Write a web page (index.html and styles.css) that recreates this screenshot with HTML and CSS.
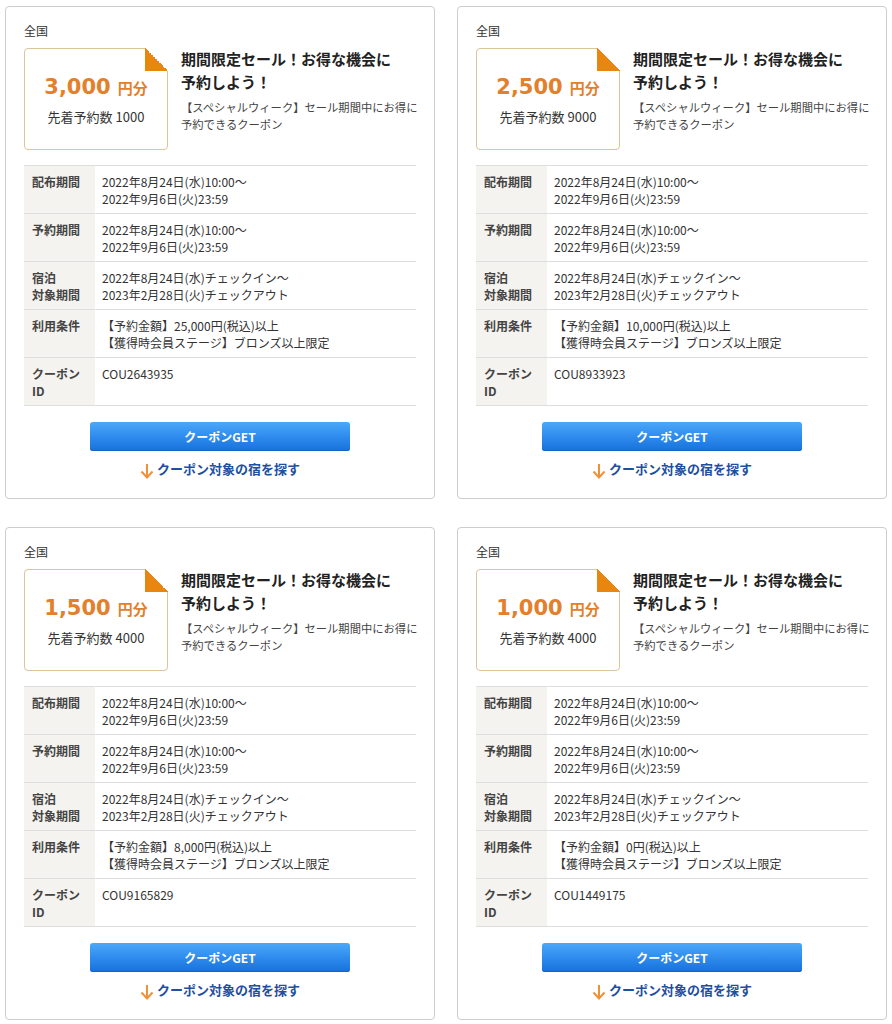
FILE: index.html
```html
<!DOCTYPE html>
<html lang="ja">
<head>
<meta charset="utf-8">
<title>クーポン</title>
<link rel="stylesheet" href="styles.css">
</head>
<body>
<div class="grid">

  <div class="card">
    <div class="area">全国</div>
    <div class="head">
      <div class="ticket">
        <div class="amount"><span class="num">3,000</span><span class="unit">円分</span></div>
        <div class="limit">先着予約数 1000</div>
      </div>
      <div class="info">
        <div class="title">期間限定セール！お得な機会に<br>予約しよう！</div>
        <div class="desc">【スペシャルウィーク】セール期間中にお得に<br>予約できるクーポン</div>
      </div>
    </div>
    <table class="spec">
      <tr><th>配布期間</th><td>2022年8月24日(水)10:00～<br>2022年9月6日(火)23:59</td></tr>
      <tr><th>予約期間</th><td>2022年8月24日(水)10:00～<br>2022年9月6日(火)23:59</td></tr>
      <tr><th>宿泊<br>対象期間</th><td>2022年8月24日(水)チェックイン～<br>2023年2月28日(火)チェックアウト</td></tr>
      <tr><th>利用条件</th><td>【予約金額】25,000円(税込)以上<br>【獲得時会員ステージ】ブロンズ以上限定</td></tr>
      <tr><th>クーポン<br>ID</th><td>COU2643935</td></tr>
    </table>
    <div class="actions">
      <a class="get-btn" href="#">クーポンGET</a>
      <a class="search-link" href="#"><svg class="arrow" width="14" height="16" viewBox="0 0 14 16"><path d="M7 1 V14 M1.5 8.5 L7 14.5 L12.5 8.5" fill="none" stroke="#f0913a" stroke-width="2"/></svg>クーポン対象の宿を探す</a>
    </div>
  </div>

  <div class="card">
    <div class="area">全国</div>
    <div class="head">
      <div class="ticket">
        <div class="amount"><span class="num">2,500</span><span class="unit">円分</span></div>
        <div class="limit">先着予約数 9000</div>
      </div>
      <div class="info">
        <div class="title">期間限定セール！お得な機会に<br>予約しよう！</div>
        <div class="desc">【スペシャルウィーク】セール期間中にお得に<br>予約できるクーポン</div>
      </div>
    </div>
    <table class="spec">
      <tr><th>配布期間</th><td>2022年8月24日(水)10:00～<br>2022年9月6日(火)23:59</td></tr>
      <tr><th>予約期間</th><td>2022年8月24日(水)10:00～<br>2022年9月6日(火)23:59</td></tr>
      <tr><th>宿泊<br>対象期間</th><td>2022年8月24日(水)チェックイン～<br>2023年2月28日(火)チェックアウト</td></tr>
      <tr><th>利用条件</th><td>【予約金額】10,000円(税込)以上<br>【獲得時会員ステージ】ブロンズ以上限定</td></tr>
      <tr><th>クーポン<br>ID</th><td>COU8933923</td></tr>
    </table>
    <div class="actions">
      <a class="get-btn" href="#">クーポンGET</a>
      <a class="search-link" href="#"><svg class="arrow" width="14" height="16" viewBox="0 0 14 16"><path d="M7 1 V14 M1.5 8.5 L7 14.5 L12.5 8.5" fill="none" stroke="#f0913a" stroke-width="2"/></svg>クーポン対象の宿を探す</a>
    </div>
  </div>

  <div class="card">
    <div class="area">全国</div>
    <div class="head">
      <div class="ticket">
        <div class="amount"><span class="num">1,500</span><span class="unit">円分</span></div>
        <div class="limit">先着予約数 4000</div>
      </div>
      <div class="info">
        <div class="title">期間限定セール！お得な機会に<br>予約しよう！</div>
        <div class="desc">【スペシャルウィーク】セール期間中にお得に<br>予約できるクーポン</div>
      </div>
    </div>
    <table class="spec">
      <tr><th>配布期間</th><td>2022年8月24日(水)10:00～<br>2022年9月6日(火)23:59</td></tr>
      <tr><th>予約期間</th><td>2022年8月24日(水)10:00～<br>2022年9月6日(火)23:59</td></tr>
      <tr><th>宿泊<br>対象期間</th><td>2022年8月24日(水)チェックイン～<br>2023年2月28日(火)チェックアウト</td></tr>
      <tr><th>利用条件</th><td>【予約金額】8,000円(税込)以上<br>【獲得時会員ステージ】ブロンズ以上限定</td></tr>
      <tr><th>クーポン<br>ID</th><td>COU9165829</td></tr>
    </table>
    <div class="actions">
      <a class="get-btn" href="#">クーポンGET</a>
      <a class="search-link" href="#"><svg class="arrow" width="14" height="16" viewBox="0 0 14 16"><path d="M7 1 V14 M1.5 8.5 L7 14.5 L12.5 8.5" fill="none" stroke="#f0913a" stroke-width="2"/></svg>クーポン対象の宿を探す</a>
    </div>
  </div>

  <div class="card">
    <div class="area">全国</div>
    <div class="head">
      <div class="ticket">
        <div class="amount"><span class="num">1,000</span><span class="unit">円分</span></div>
        <div class="limit">先着予約数 4000</div>
      </div>
      <div class="info">
        <div class="title">期間限定セール！お得な機会に<br>予約しよう！</div>
        <div class="desc">【スペシャルウィーク】セール期間中にお得に<br>予約できるクーポン</div>
      </div>
    </div>
    <table class="spec">
      <tr><th>配布期間</th><td>2022年8月24日(水)10:00～<br>2022年9月6日(火)23:59</td></tr>
      <tr><th>予約期間</th><td>2022年8月24日(水)10:00～<br>2022年9月6日(火)23:59</td></tr>
      <tr><th>宿泊<br>対象期間</th><td>2022年8月24日(水)チェックイン～<br>2023年2月28日(火)チェックアウト</td></tr>
      <tr><th>利用条件</th><td>【予約金額】0円(税込)以上<br>【獲得時会員ステージ】ブロンズ以上限定</td></tr>
      <tr><th>クーポン<br>ID</th><td>COU1449175</td></tr>
    </table>
    <div class="actions">
      <a class="get-btn" href="#">クーポンGET</a>
      <a class="search-link" href="#"><svg class="arrow" width="14" height="16" viewBox="0 0 14 16"><path d="M7 1 V14 M1.5 8.5 L7 14.5 L12.5 8.5" fill="none" stroke="#f0913a" stroke-width="2"/></svg>クーポン対象の宿を探す</a>
    </div>
  </div>

</div>
</body>
</html>
```

FILE: styles.css
```css
* { box-sizing: border-box; }

body {
  margin: 0;
  background: #fff;
  color: #333;
  font-family: "Noto Sans CJK JP", "Noto Sans", sans-serif;
  font-size: 12px;
}

.grid {
  display: grid;
  grid-template-columns: 430px 430px;
  column-gap: 22px;
  row-gap: 28px;
  padding: 6px 0 0 5px;
}

.card {
  border: 1px solid #cdcdcd;
  border-radius: 4px;
  padding: 15px 18px 19px 18px;
  background: #fff;
}

.area {
  font-size: 12px;
  line-height: 18px;
  color: #333;
  margin-bottom: 8px;
}

.head {
  display: flex;
  align-items: flex-start;
}

.ticket {
  position: relative;
  flex: 0 0 144px;
  height: 102px;
  border: 1px solid #dcc49c;
  border-radius: 4px;
  padding-top: 2px;
  display: flex;
  flex-direction: column;
  justify-content: center;
  align-items: center;
}

.ticket::after {
  content: "";
  position: absolute;
  top: -1px;
  right: -1px;
  width: 23px;
  height: 23px;
  background: linear-gradient(to bottom left, #fff 50%, #e8860f 50%);
}

.amount {
  line-height: 26px;
  color: #e3802c;
  font-weight: bold;
  white-space: nowrap;
}

.num {
  font-family: "DejaVu Sans", sans-serif;
  font-size: 21px;
}

.unit {
  font-size: 15px;
  margin-left: 7px;
}

.limit {
  margin-top: 6px;
  font-size: 13px;
  line-height: 18px;
  color: #333;
}

.info {
  margin-left: 13px;
  margin-top: -1px;
}

.title {
  font-size: 15px;
  line-height: 23px;
  font-weight: bold;
  color: #222;
}

.desc {
  margin-top: 6px;
  font-size: 11.3px;
  line-height: 17px;
  color: #444;
  white-space: nowrap;
}

.spec {
  width: 100%;
  margin-top: 15px;
  border-collapse: collapse;
}

.spec th,
.spec td {
  border-top: 1px solid #dedede;
  border-bottom: 1px solid #dedede;
  padding: 7px 7px 6px 7px;
  line-height: 17px;
  font-size: 12px;
  vertical-align: top;
  text-align: left;
}

.spec th {
  width: 71px;
  padding-left: 8px;
  background: #f5f3ef;
  font-weight: bold;
  color: #444;
}

.spec td {
  color: #333;
}

.actions {
  display: flex;
  flex-direction: column;
  align-items: center;
  margin-top: 16px;
}

.get-btn {
  display: block;
  width: 260px;
  height: 29px;
  line-height: 29px;
  border-radius: 3px;
  background: linear-gradient(to bottom, #4ba8f8 0%, #2f8cee 50%, #1771da 100%);
  box-shadow: inset 0 -1px 0 #1565c6;
  color: #fff;
  font-weight: bold;
  font-size: 12px;
  text-align: center;
  text-decoration: none;
}

.search-link {
  display: flex;
  align-items: center;
  margin-top: 8px;
  line-height: 18px;
  font-size: 13px;
  font-weight: bold;
  color: #1f4fa0;
  text-decoration: none;
}

.arrow {
  margin-right: 3px;
  margin-top: 4px;
}
```
